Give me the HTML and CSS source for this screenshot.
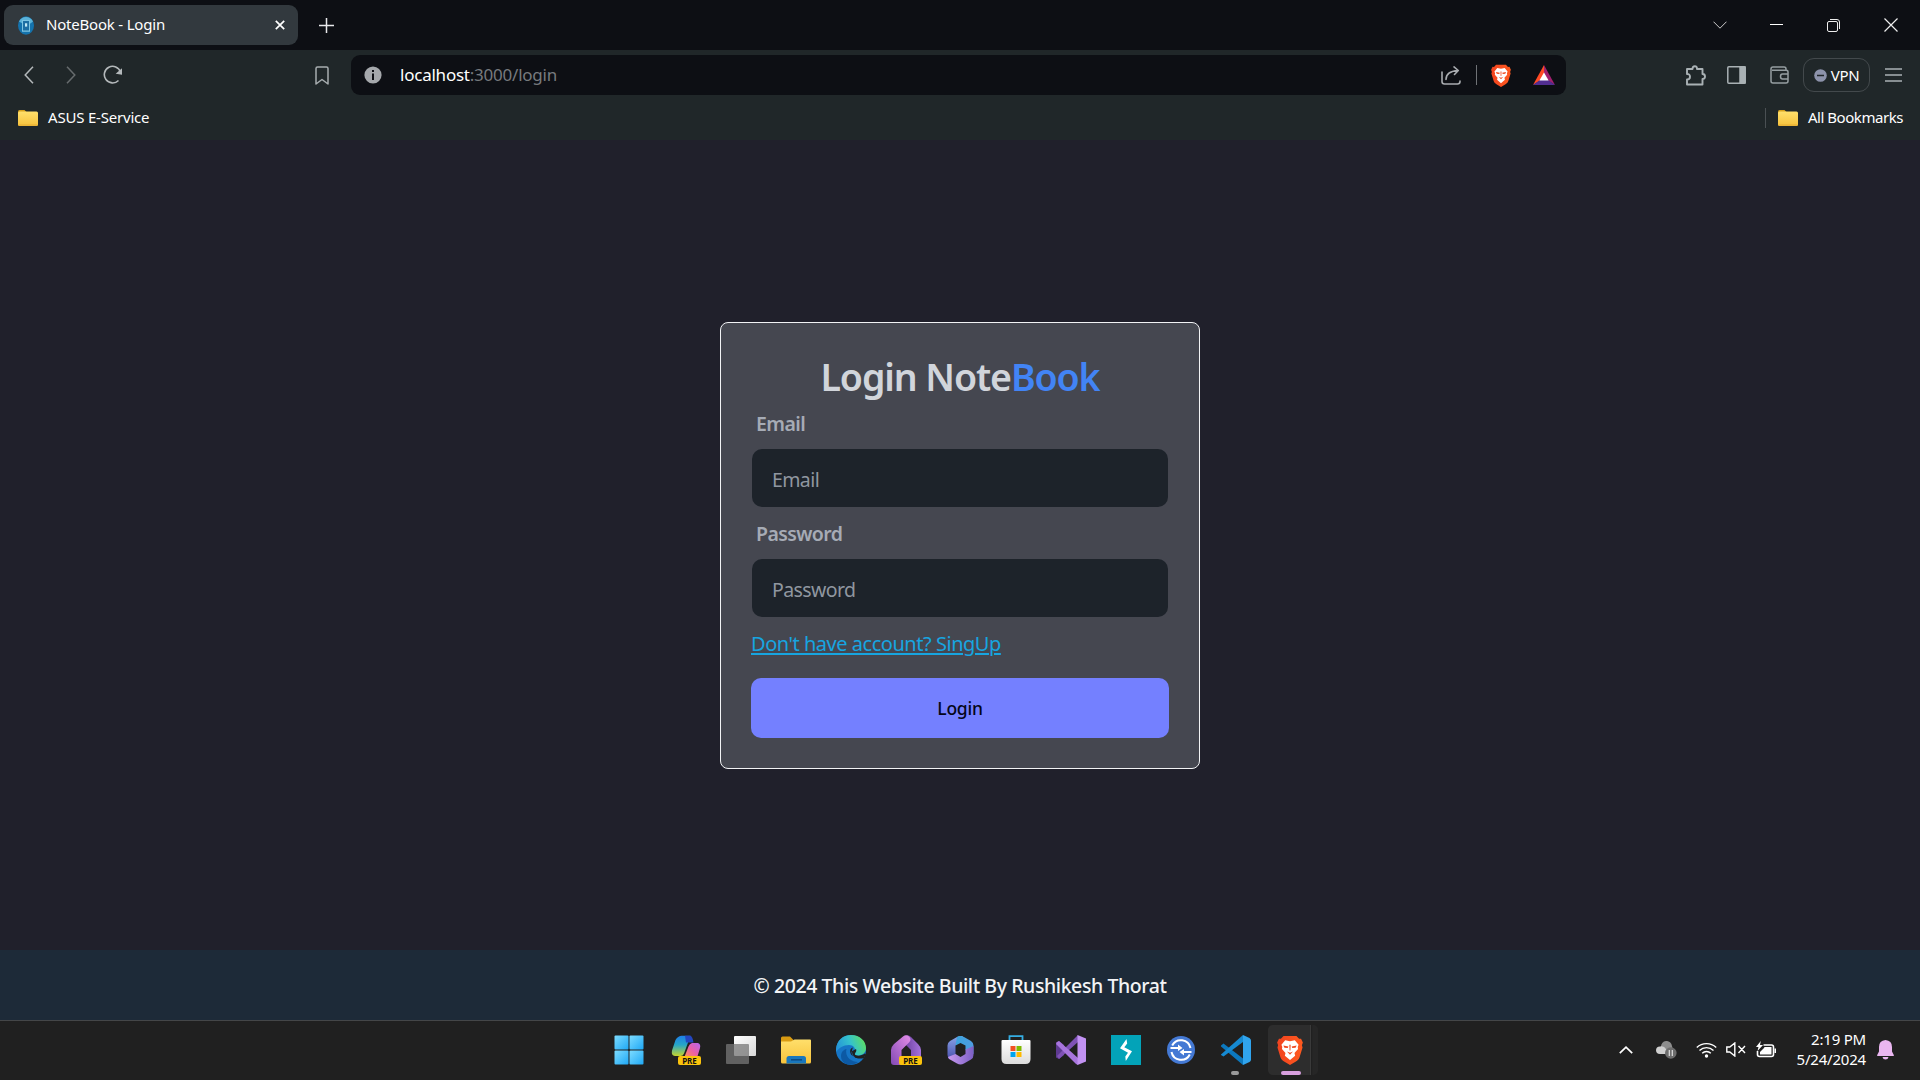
FILE: index.html
```html
<!DOCTYPE html>
<html lang="en">
<head>
<meta charset="utf-8">
<title>NoteBook - Login</title>
<link rel="stylesheet" href="styles.css">
</head>
<body>
<svg class="defs" width="0" height="0">
  <defs>
    <linearGradient id="gBrave" x1="0" x2="1"><stop offset="0" stop-color="#f1431f"/><stop offset="1" stop-color="#ff5a1f"/></linearGradient>
    <linearGradient id="gFolder" x1="0" x2="0" y1="0" y2="1"><stop offset="0" stop-color="#ffdf6b"/><stop offset="1" stop-color="#f7c33c"/></linearGradient>
    <linearGradient id="gWin" x1="0" x2="1" y1="0" y2="1"><stop offset="0" stop-color="#7ddcff"/><stop offset="1" stop-color="#1fa8f5"/></linearGradient>
    <linearGradient id="gCopA" x1="0" x2="0" y1="0" y2="1"><stop offset="0" stop-color="#1e7fe8"/><stop offset=".45" stop-color="#25a6c8"/><stop offset="1" stop-color="#c5d52c"/></linearGradient>
    <linearGradient id="gCopB" x1="1" x2="0" y1="0" y2="1"><stop offset="0" stop-color="#b565f0"/><stop offset=".5" stop-color="#ec5fa5"/><stop offset="1" stop-color="#ff9a4a"/></linearGradient>
    <linearGradient id="gEdge" x1="0" x2="1" y1=".6" y2=".3"><stop offset="0" stop-color="#2391d8"/><stop offset=".5" stop-color="#34c1cd"/><stop offset="1" stop-color="#5fe05e"/></linearGradient>
    <linearGradient id="gHomeA" x1="1" x2="0" y1="0" y2="1"><stop offset="0" stop-color="#e58ee9"/><stop offset="1" stop-color="#8249b4"/></linearGradient>
    <linearGradient id="gHomeB" x1="0" x2="1"><stop offset="0" stop-color="#6b3fa0"/><stop offset="1" stop-color="#a673dc"/></linearGradient>
    <linearGradient id="gOffA" x1="0" x2="0" y1="0" y2="1"><stop offset="0" stop-color="#8aa5e8"/><stop offset="1" stop-color="#4a4fae"/></linearGradient>
    <linearGradient id="gOffB" x1="0" x2="1"><stop offset="0" stop-color="#3aa4dd"/><stop offset="1" stop-color="#4f9be0"/></linearGradient>
    <linearGradient id="gOffC" x1="0" x2="1"><stop offset="0" stop-color="#c99af0"/><stop offset="1" stop-color="#7c5fc4"/></linearGradient>
    <linearGradient id="gStore" x1="0" x2="0" y1="0" y2="1"><stop offset="0" stop-color="#ffffff"/><stop offset="1" stop-color="#dcdcdc"/></linearGradient>
    <linearGradient id="gGlass" x1="0" x2="1" y1="0" y2="1"><stop offset="0" stop-color="#ffffff"/><stop offset="1" stop-color="#d8d8d8"/></linearGradient>
    <symbol id="lion" viewBox="0 0 24 28">
      <path fill="url(#gBrave)" d="M6 1h12l2.5 2.6 1.8-.2L24 7l-.9 2.6.6 2L21 20.500c-.8 2.500-2 3.200-3.500 4.200L12 28l-5.500-3.300C5 23.700 3.800 23 3 20.500L.3 11.600l.6-2L0 7l1.700-3.600 1.800.2z"/>
      <path fill="#fff" d="M7.500 5 12 5.800 16.500 5l3.500 4-.8 2.200.3 1.800-3.300 3.800.6 2.500L12 23.400l-4.800-4.100.6-2.500L4.500 13l.3-1.800L4 9z"/>
      <path fill="#f04a20" d="M5.800 9.800l4.700 1-.6 1.400-3.100-.4zM18.200 9.800l-4.700 1 .6 1.400 3.100-.4zM11.400 9h1.200l-.2 5.500h-.8zM9.200 15.500l2.800 1.100 2.800-1.100-2.800 3z"/>
    </symbol>
    <symbol id="folder" viewBox="0 0 20 16">
      <path fill="#d9a21c" d="M0 1.500Q0 0 1.500 0H6.500L8.500 2V6H0z"/>
      <rect y="1.600" width="20" height="14.400" rx="1.500" fill="url(#gFolder)"/>
      <path fill="#e0a930" d="M.5 14.600h19v.9H.5z"/>
    </symbol>
  </defs>
</svg>

<header class="browser">
  <div class="tabstrip">
    <div class="tab">
      <svg class="favicon" width="16" height="19" viewBox="0 0 16 17" preserveAspectRatio="none"><ellipse cx="8" cy="8.500" rx="8" ry="8.300" fill="#1473ad"/><path d="M1 5a8 8 0 0 1 14 0L9 9z" fill="#5bb2d8"/><path d="M4.500 4h7v9.500h-7z" fill="#1d6fa3" stroke="#7cc4e2"/><path d="M7 6.500h2.200v3H7z" fill="#bfe8f5"/></svg>
      <span class="tab-title">NoteBook - Login</span>
      <svg width="10" height="10" viewBox="0 0 10 10" stroke="#fff" stroke-width="1.700"><path d="M.8.8l8.400 8.400M9.200.8.8 9.200"/></svg>
    </div>
    <button class="new-tab"><svg width="15" height="15" viewBox="0 0 15 15" stroke="#e8e8ea" stroke-width="1.500"><path d="M7.500 0v15M0 7.500h15"/></svg></button>
    <div class="window-controls">
      <button><svg width="14" height="8" viewBox="0 0 14 8" fill="none" stroke="#ccc"><path d="M.5.700 7 7.200 13.500.700"/></svg></button>
      <button><svg width="13" height="13" viewBox="0 0 13 13" stroke="#fff"><path d="M0 5.500h13"/></svg></button>
      <button><svg width="13" height="13" viewBox="0 0 13 13" fill="none" stroke="#eee"><rect x=".5" y="2.500" width="10" height="10" rx="1.500"/><path d="M3 .5h7Q12.500.500 12.500 3v7"/></svg></button>
      <button><svg width="14" height="14" viewBox="0 0 14 14" stroke="#eee" stroke-width="1.200"><path d="M.5.5l13 13M13.500.500.500 13.500"/></svg></button>
    </div>
  </div>

  <div class="toolbar">
    <button class="tool"><svg width="10" height="18" viewBox="0 0 10 18" fill="none" stroke="#b4b9bb" stroke-width="1.500"><path d="M9 .8 1.200 9 9 17.200"/></svg></button>
    <button class="tool"><svg width="10" height="18" viewBox="0 0 10 18" fill="none" stroke="#676c6e" stroke-width="1.500"><path d="M1 .8 8.800 9 1 17.200"/></svg></button>
    <button class="tool"><svg width="20" height="20" viewBox="0 0 20 20" fill="none" stroke="#b4b9bb" stroke-width="1.600"><path d="M17.500 7A8.300 8.300 0 1 0 15.500 15.500"/><path d="M14.500 8.300 18.200 8.800 18.200 5z" fill="#b4b9bb"/></svg></button>
    <button class="tool bookmark"><svg width="14" height="19" viewBox="0 0 14 19" fill="none" stroke="#a7adaf" stroke-width="1.500" stroke-linejoin="round"><path d="M1 2.500Q1 1 2.500 1h9Q13 1 13 2.500V18L7 13.500 1 18z"/></svg></button>
    <div class="address">
      <svg width="18" height="18" viewBox="0 0 18 18"><circle cx="9" cy="9" r="8.600" fill="#a5a8ac"/><path fill="#0d0f14" d="M8 4h2v2H8zM8 7.500h2V14H8z"/></svg>
      <span class="url"><span class="host">localhost</span><span class="path">:3000/login</span></span>
      <svg class="share" width="20" height="19" viewBox="0 0 20 19" fill="none" stroke="#a9acb0" stroke-width="1.600" stroke-linecap="round" stroke-linejoin="round"><path d="M1 6v9.500Q1 18 3.500 18H16.500Q19 18 19 15.500V15M5 13.500C5 8 9 5 17 4.500M13 .9 17.300 4.500 13.500 8.500"/></svg>
      <i class="sep"></i>
      <svg class="shield" width="20" height="23"><use href="#lion"/></svg>
      <svg width="22" height="20" viewBox="0 0 22 20"><path fill="#ff4a24" d="M11 0 0 20 11 13z"/><path fill="#a0206f" d="M11 0 22 20 11 13z"/><path fill="#522e91" d="M0 20h22L11 12z"/><path fill="#fff" d="M11 7.500 15.600 15.500H6.400z"/></svg>
    </div>
    <div class="actions">
      <button class="puzzle"><svg width="21" height="21" viewBox="0 0 21 21" fill="none" stroke="#a9b1b4" stroke-width="1.900" stroke-linejoin="round"><path d="M2 4h5.500Q7.500 1.200 9.800 1.200T12 4h5.500v5Q20 9 20 11.500T17.500 14v5.500H2v-5Q5 14.500 5 11.700T2 9z"/></svg></button>
      <button class="panel"><svg width="19" height="18" viewBox="0 0 19 18" fill="none" stroke="#a9b1b4" stroke-width="1.500"><rect x=".8" y=".8" width="17.400" height="16.400" rx="1"/><path d="M13 1h5v16h-5z" fill="#a9b1b4"/></svg></button>
      <button class="wallet"><svg width="19" height="18" viewBox="0 0 19 18" fill="none" stroke="#959ea1" stroke-width="1.500"><path d="M16 4V3Q16 1 14 1H3Q1 1 1 3V15Q1 17 3 17H16Q18 17 18 15V6Q18 4.300 16 4.300H2M18 8h-5.500Q10.500 8 10.500 10.500T12.500 13H18"/></svg></button>
      <button class="vpn"><svg width="13" height="13" viewBox="0 0 13 13"><circle cx="6.500" cy="6.500" r="6.300" fill="#8d93ab"/><path d="M3 6.500h7" stroke="#20272a" stroke-width="1.500"/></svg><span>VPN</span></button>
      <button class="menu"><svg width="17" height="14" viewBox="0 0 17 14" stroke="#a9b1b4" stroke-width="1.400"><path d="M0 1h17M0 7h17M0 13h17"/></svg></button>
    </div>
  </div>

  <div class="bookmarks">
    <svg width="20" height="16"><use href="#folder"/></svg><span class="asus">ASUS E-Service</span>
    <i class="sep"></i>
    <svg width="20" height="16"><use href="#folder"/></svg><span class="all">All Bookmarks</span>
  </div>
</header>

<main class="page">
  <form class="card">
    <h1>Login Note<span class="accent">Book</span></h1>
    <label class="label" for="email">Email</label>
    <input id="email" class="input" type="email" placeholder="Email">
    <label class="label second" for="password">Password</label>
    <input id="password" class="input" type="password" placeholder="Password">
    <a class="signup" href="#">Don't have account? SingUp</a>
    <button class="submit" type="button">Login</button>
  </form>
</main>

<footer class="footer">© 2024 This Website Built By Rushikesh Thorat</footer>

<nav class="taskbar">
  <div class="apps">
    <span class="app start"><svg width="30" height="30" viewBox="0 0 30 30" fill="url(#gWin)"><rect x=".5" y=".5" width="14" height="14" rx="1"/><rect x="15.500" y=".5" width="14" height="14" rx="1"/><rect x=".5" y="15.500" width="14" height="14" rx="1"/><rect x="15.500" y="15.500" width="14" height="14" rx="1"/></svg></span>
    <span class="app copilot"><svg width="30" height="30" viewBox="0 0 30 30"><path fill="url(#gCopA)" d="M8 1.500Q9 .8 10.500.800H19.500L13 18.500Q12 21 9.500 21H4Q0 20.500 1 15.500L4.500 5Q5.500 2.500 8 1.500z"/><path fill="#2446c0" d="M14 .8h5.500Q21.500 1.500 22.500 7.500H15z"/><path fill="url(#gCopB)" d="M21 8H27Q30 9 29 13L26 23H13L17.500 11.500Q18.500 8.500 21 8z"/></svg><b class="pre">PRE</b></span>
    <span class="app"><svg width="32" height="30" viewBox="0 0 32 30"><rect x="9" y="1" width="22" height="20" rx="1" fill="url(#gGlass)"/><rect x="1" y="9" width="23" height="20" rx="1" fill="#777" fill-opacity=".75"/></svg></span>
    <span class="app"><svg width="30" height="28" viewBox="0 0 30 28"><path fill="#d99b12" d="M0 2Q0 .5 1.500.500H9L12.500 4V9H0z"/><path fill="url(#gFolder)" d="M0 5.500H10L13.500 3.500H29Q30 3.500 30 4.500V26Q30 27.500 28.500 27.500H1.500Q0 27.500 0 26z"/><path fill="#1977bd" d="M5.500 27.500V22.500Q5.500 20 8 20H22.500Q25 20 25 22.500V27.500z"/><path stroke="#0b4a83" stroke-width="1.500" d="M10 23.800h11"/></svg></span>
    <span class="app"><svg width="30" height="30" viewBox="0 0 30 30"><circle cx="15" cy="15" r="15" fill="#1675c6"/><path fill="url(#gEdge)" d="M0 14C1 5 7 0 15 0c9 0 15 6 15 13 0 5-4 7.500-8.500 7.500-3 0-4-1-3-3 1.800-4-1-7.500-5.500-7.500C7 10 3 13 0 17z"/><path fill="#0c59a4" d="M10.500 14C8.500 22 15 27 22 27c-4 3-9 3.500-13 1.500C3 25 4 15 10.500 14z"/><path fill="#202020" d="M17 12.500c-5 1-3.500 9.500 4 10 3 .2 5.500-.8 8-2.300V21l-1 2c-6 2-12-1-12-6.500 0-2 .5-3 1-4zM20 14c1.500 3-2.500 4.500-.5 6 2.500 1.500 7 .5 9-1.500l1.500 1-2.500 3.500c-6 2-12-1-12-6.500z"/></svg></span>
    <span class="app home"><svg width="30" height="30" viewBox="0 0 30 30"><path fill="url(#gHomeB)" d="M14 1Q17-1 20 2L27 9Q30 12 30 15V27H20V15L13 8z"/><path fill="url(#gHomeA)" d="M12 1.500Q15-1 18 1.500 21 4.500 18 7.500L10.500 15V30H3Q0 30 0 27V15Q0 12 3 9z"/></svg><b class="pre">PRE</b></span>
    <span class="app"><svg width="27" height="30" viewBox="0 0 27 30"><path fill="url(#gOffA)" d="M10 2 3 6Q.500 7.500.500 10.500V20Q.5 23 3 24.500L8.500 20V10.500L16 1Q12.500.500 10 2z"/><path fill="url(#gOffB)" d="M10 2Q13.500 0 17 2L24 6Q26.500 7.500 26.500 10.500V19L18.500 15V10.500L13.500 8 8.500 10.500z"/><path fill="url(#gOffC)" d="M18.500 14.500 26.500 11V20Q26.500 23 24 24.500L17 28.500Q13.500 30.500 10 28.500L3 24.500Q1.500 23.500 1 22L8.500 19 13.500 22 18.500 19z"/></svg></span>
    <span class="app"><svg width="30" height="30" viewBox="0 0 30 30"><path d="M8.500 6V1.200H21.500V6" fill="none" stroke="#35aee3" stroke-width="1.800"/><path fill="url(#gStore)" d="M.5 6Q.5 5 1.500 5H28.500Q29.500 5 29.500 6V24Q29.500 29 24.500 29H5.500Q.5 29 .5 24z"/><path fill="#f25022" d="M9.500 11h5v5h-5z"/><path fill="#7fba00" d="M15.500 11h5v5h-5z"/><path fill="#00a4ef" d="M9.500 17h5v5h-5z"/><path fill="#ffb900" d="M15.500 17h5v5h-5z"/></svg></span>
    <span class="app"><svg width="30" height="30" viewBox="0 0 30 30"><path fill="#5e3a91" d="M0 7.500 3 6 8 10V20L3 24 0 22.500z"/><path fill="#7f52b5" d="M3 24 22 7V0L1 21z"/><path fill="#a875dd" d="M3 6 22 23V30L20 29 0 9Q0 7 3 6z"/><path fill="#c292f2" d="M21.500 0 30 3.500V26.500L21.500 30z"/></svg></span>
    <span class="app"><svg width="30" height="30" viewBox="0 0 30 30"><path fill="#03a3b8" d="M0 0h30v30H0z"/><path fill="#fff" d="M15.500 4 16.200 8.500 13.300 12.200 21 16.300 14.800 26 14.300 21.500 17 17.700 9 13.300z"/></svg></span>
    <span class="app"><svg width="28" height="28" viewBox="0 0 28 28"><circle cx="14" cy="14" r="14" fill="#4479d4"/><g fill="none" stroke="#fff" stroke-width="2"><path d="M3.500 12H12.500M5.200 9.500A9.800 9.800 0 0 1 23.500 12M24.500 16H15.500M22.800 18.500A9.800 9.800 0 0 1 4.500 16"/></g><path fill="#fff" d="M11 8.500 15.500 12 11 15zM17 13 12.500 16 17 19.500z"/></svg></span>
    <span class="app running"><svg width="30" height="30" viewBox="0 0 30 30"><path fill="#0c78be" d="M0 10.500 2.500 8.500 22 23.500V30L0 11.500z"/><path fill="#168ad2" d="M0 19.500 22 0V7L2.500 21.500 0 20z"/><path fill="#30a4ee" d="M22 0 28.500 3Q30 4 30 5.500V24.500Q30 26 28.500 27L22 30z"/></svg></span>
    <span class="app active"><span class="tile"><svg width="26" height="30"><use href="#lion"/></svg></span></span>
  </div>
  <div class="tray">
    <svg class="up" width="14" height="8" viewBox="0 0 14 8" fill="none" stroke="#fff" stroke-width="1.700"><path d="M.8 7.200 7 1.200 13.200 7.200"/></svg>
    <svg class="cloud" width="21" height="18" viewBox="0 0 21 18"><path fill="#8d8d8d" d="M5 6a5.500 5.500 0 0 1 11-1l1.500 6H8z"/><path fill="#cfcfcf" d="M4 13Q0 13 0 9.300T4 5.500Q8 4.500 10 8l4 5z"/><circle cx="14.800" cy="12" r="5.800" fill="#6d6d6d"/><path stroke="#ddd" stroke-width="1.200" d="M13.300 9v6M16.300 9v6"/></svg>
    <svg class="wifi" width="21" height="16" viewBox="0 0 21 16" fill="none" stroke="#fff" stroke-width="1.400"><path d="M.8 5.500a14 14 0 0 1 19.400 0M3.500 8.500a10 10 0 0 1 14 0M6.200 11.300a6.200 6.200 0 0 1 8.600 0"/><circle cx="10.500" cy="14" r="1.700" fill="#fff" stroke="none"/></svg>
    <svg class="speaker" width="20" height="15" viewBox="0 0 20 15" fill="none" stroke="#fff" stroke-width="1.400"><path d="M.8 5v5h3l5 4V1l-5 4zM12.500 4l6.500 7M19 4l-6.500 7"/></svg>
    <svg class="battery" width="21" height="17" viewBox="0 0 21 17"><path d="M7.500 4h8Q17.500 4 17.500 6v7.500q0 2-2 2h-12q-2 0-2-2V10" fill="none" stroke="#fff" stroke-width="1.600"/><path fill="#fff" d="M8.500 6h7v7.500H4V11L8 7zM18.500 7.500H20v4.500h-1.500zM4.800 0 0 6h2.500L1.500 10 7 4H4z"/></svg>
    <div class="clock"><span>2:19 PM</span><span>5/24/2024</span></div>
    <svg class="bell" width="17" height="20" viewBox="0 0 17 20" fill="#eab6f0"><path d="M8.500 0Q15 .5 15 7v4.500L16.800 15v1H.2v-1L2 11.500V7Q2 .5 8.500 0z"/><path d="M5.500 17h6q-.5 2.500-3 2.500t-3-2.500z"/></svg>
  </div>
</nav>
</body>
</html>
```
FILE: styles.css
```css
* { box-sizing: border-box; }

body {
  margin: 0;
  width: 1920px;
  height: 1080px;
  overflow: hidden;
  display: flex;
  flex-direction: column;
  background: #20202b;
  color: #fff;
  font-family: "Noto Sans", "Open Sans", sans-serif;
}

.defs { position: absolute; }

button {
  display: flex;
  align-items: center;
  justify-content: center;
  padding: 0;
  border: 0;
  background: none;
  color: inherit;
  font: inherit;
}

svg { display: block; flex: none; }

/* Browser chrome */
.browser { height: 140px; flex: none; background: #202729; }

.tabstrip { display: flex; height: 50px; padding: 5px 0 5px 4px; background: #0d0f14; }

.tab {
  display: flex;
  align-items: center;
  width: 294px;
  height: 40px;
  padding: 0 13px 0 14px;
  border-radius: 9px;
  background: #32393e;
  font-size: 15px;
  letter-spacing: -.2px;
}
.favicon { margin-right: 12px; }
.tab-title { margin-right: auto; padding-bottom: 2px; line-height: 20px; }

.new-tab { width: 56px; }

.window-controls { display: flex; margin-left: auto; padding-right: 1px; }
.window-controls button { width: 57px; }

.toolbar { display: flex; height: 50px; padding: 5px 0 5px 8px; }
.tool { width: 42px; }
.bookmark { margin: 0 8px 0 167px; }

.address {
  display: flex;
  align-items: center;
  width: 1215px;
  padding: 0 11px 0 13px;
  border-radius: 9px;
  background: #0d0f14;
}
.url { margin: 0 auto 0 18px; font-size: 17px; line-height: 24px; letter-spacing: -.23px; }
.path { color: #777a7e; }
.address .sep { width: 1px; height: 20px; margin: 0 14px 0 15px; background: #6f7276; }
.shield { margin-right: 22px; }

.actions { display: flex; margin-left: 108px; }
.puzzle { width: 43px; }
.panel { width: 38px; }
.wallet { width: 48px; }
.vpn {
  width: 67px;
  height: 34px;
  gap: 4px;
  margin-top: 3px;
  border: 1px solid #43494c;
  border-radius: 11px;
  font-size: 15px;
  letter-spacing: -.3px;
}
.menu { width: 46px; }

.bookmarks {
  display: flex;
  align-items: center;
  height: 36px;
  padding: 0 17px 0 18px;
  font-size: 15px;
  letter-spacing: -.2px;
}
.bookmarks span { padding-bottom: 2px; }
.asus { margin: 0 auto 0 10px; }
.bookmarks .sep { width: 1px; height: 20px; margin-right: 12px; background: #4a5053; }
.all { margin-left: 10px; letter-spacing: -.45px; }

/* Login page */
.page { flex: none; height: 810px; display: flex; justify-content: center; align-items: flex-start; padding-top: 182px; }

.card {
  display: flex;
  flex-direction: column;
  width: 480px;
  height: 447px;
  padding: 31px 30px 30px;
  border: 1px solid #f2f3f5;
  border-radius: 8px;
  background: #454750;
}
.card h1 { margin: 0; text-align: center; font-size: 37.500px; font-weight: 600; line-height: 45px; letter-spacing: -1.1px; color: #d1d5db; }
.card h1 .accent { color: #4284f5; }
.label { display: block; height: 50px; padding: 10px 5px; font-size: 19.500px; font-weight: 600; line-height: 30px; letter-spacing: -.6px; color: #a6abb5; }
.second { height: 52px; padding-top: 12px; }
.input {
  width: 416px;
  height: 58px;
  margin: 0 1px;
  padding: 2px 20px 0;
  border: 0;
  border-radius: 10px;
  background: #1d232a;
  font: 19.500px/30px "Noto Sans", sans-serif;
  letter-spacing: -.6px;
}
.input::placeholder { color: #9097a0; opacity: 1; }
.signup { height: 61px; padding-top: 10px; font-size: 20px; line-height: 34px; letter-spacing: -.47px; color: #17a5e0; text-decoration: underline; text-decoration-thickness: 2px; text-underline-offset: 2px; }
.submit { height: 60px; border-radius: 10px; background: #7480ff; color: #050617; font-size: 17.500px; font-weight: 500; letter-spacing: -.25px; }

.footer { display: flex; flex: none; align-items: center; justify-content: center; height: 70px; background: #1d2a38; font-size: 19.500px; font-weight: 500; letter-spacing: -.42px; color: #f3f4f6; }

/* Taskbar */
.taskbar { display: flex; flex: none; height: 60px; padding-left: 602px; border-top: 1px solid #444648; background: #202020; }
.apps { display: flex; height: 59px; padding-bottom: 1px; }
.app { position: relative; display: flex; align-items: center; justify-content: center; width: 55px; }
.start { width: 56px; padding-right: 2px; }
.pre {
  position: absolute;
  left: 20px;
  bottom: 14px;
  width: 23px;
  height: 9px;
  border-radius: 2px;
  background: #fbc30c;
  color: #111;
  font: bold 8px/9px "Noto Sans", sans-serif;
  text-align: center;
}
.home .pre { left: 21px; }
.running::after, .active::after {
  content: "";
  position: absolute;
  bottom: 4px;
  left: 23px;
  width: 8px;
  height: 4px;
  border-radius: 2px;
  background: #9a9a9a;
}
.active::after { left: 18px; width: 20px; background: #d9a0df; }
.tile {
  display: flex;
  align-items: center;
  justify-content: center;
  flex: none;
  width: 50px;
  height: 50px;
  margin-left: 4px;
  padding-right: 6px;
  border-radius: 5px;
  background: linear-gradient(90deg, #2d2d2d 42px, #3a3a3a 42px, #3a3a3a 43px, #1e1e1e 43px, #262626 45px);
}

.tray { display: flex; align-items: center; margin-left: 301px; padding-bottom: 2px; }
.cloud { margin-left: 23px; }
.wifi { margin-left: 19px; }
.speaker { margin-left: 9px; }
.battery { margin-left: 10px; }
.clock { display: flex; flex-direction: column; align-items: flex-end; width: 89px; padding-bottom: 1px; font-size: 15px; line-height: 20px; letter-spacing: -.2px; }
.bell { margin-left: 11px; }
```
